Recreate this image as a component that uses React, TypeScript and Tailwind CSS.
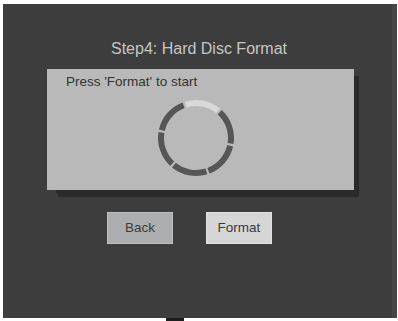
import React from "react";

function arc(cx: number, cy: number, r: number, a0: number, a1: number) {
  const rad = (a: number) => (a * Math.PI) / 180;
  const x0 = cx + r * Math.sin(rad(a0));
  const y0 = cy - r * Math.cos(rad(a0));
  const x1 = cx + r * Math.sin(rad(a1));
  const y1 = cy - r * Math.cos(rad(a1));
  return `M ${x0.toFixed(2)} ${y0.toFixed(2)} A ${r} ${r} 0 0 1 ${x1.toFixed(2)} ${y1.toFixed(2)}`;
}

function Ring() {
  const segs = [0, 1, 2, 3, 4, 5].map((k) => {
    const start = -19 + 60 * k + 1.8;
    const end = -19 + 60 * (k + 1) - 1.8;
    return { d: arc(40, 40, 35, start, end), light: k === 0 };
  });
  return (
    <svg width="80" height="80" viewBox="0 0 80 80">
      {segs.map((s, i) => (
        <path
          key={i}
          d={s.d}
          fill="none"
          stroke={s.light ? "#d9d9d9" : "#565656"}
          strokeWidth="6"
        />
      ))}
    </svg>
  );
}

export default function App() {
  return (
    <div
      className="relative w-[398px] h-[321px] bg-white pt-[4px] pl-[3px] pr-[1px] pb-[3px] overflow-hidden"
      style={{ fontFamily: '"Liberation Sans", Arial, sans-serif' }}
    >
      <div className="w-full h-full bg-[#3d3d3e] border-r-[5px] border-[#464647] flex flex-col">
        <div className="mt-[35px] h-[20px] leading-[20px] text-[16px] text-[#c6c6c6] text-center pl-[3px]">
          Step4: Hard Disc Format
        </div>
        <div className="mt-[10px] ml-[44px] w-[307px] h-[121px] bg-[#b9b9b9] shadow-[7px_5px_0_-2px_#2a2a2a,8px_10px_0_-3px_#2a2a2a] flex flex-col">
          <div className="mt-[4px] ml-[19px] h-[18px] leading-[18px] text-[13.5px] text-[#333333]">
            Press 'Format' to start
          </div>
          <div className="mt-[7px] ml-[109px]">
            <Ring />
          </div>
        </div>
        <div className="mt-[22px] ml-[104px] flex gap-[33px]">
          <div className="w-[66px] h-[32px] bg-[#adaeb0] border border-[#bcbcbe] flex items-center justify-center text-[13.5px] text-[#3c3c3c]">
            Back
          </div>
          <div className="w-[66px] h-[32px] bg-[#d6d6d7] border border-[#e0e0e0] flex items-center justify-center text-[13.5px] text-[#3a3a3a]">
            Format
          </div>
        </div>
      </div>
      <div className="absolute left-[166px] top-[318px] w-[18px] h-[3px] bg-[#1e1e1e]" />
    </div>
  );
}
